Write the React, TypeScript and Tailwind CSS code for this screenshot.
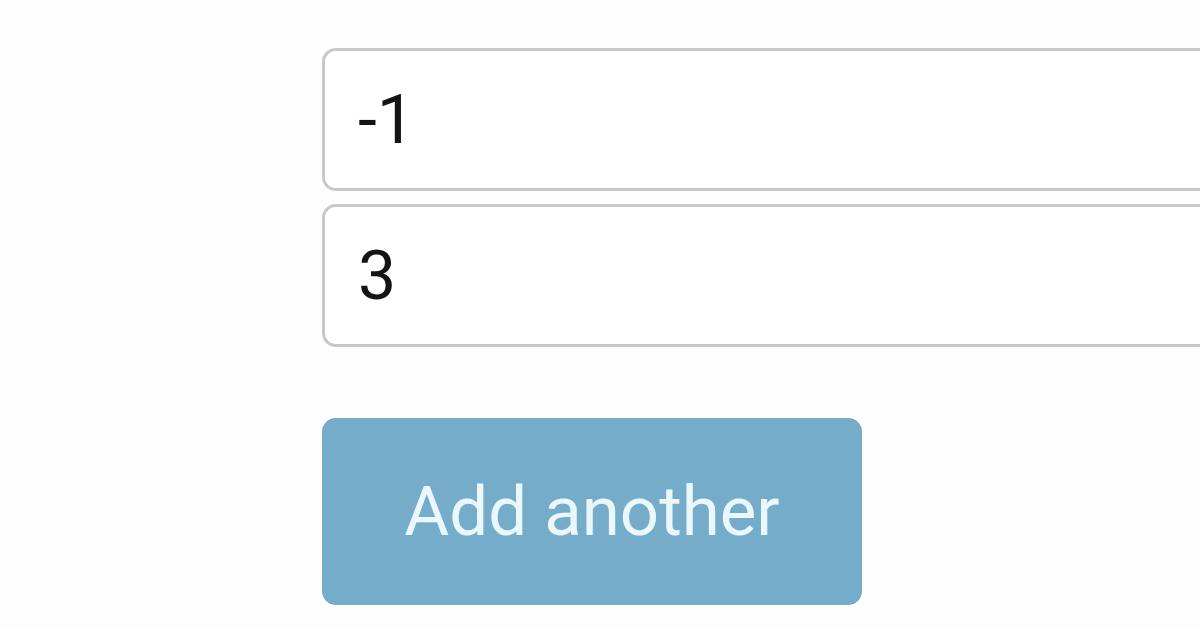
import React, { useState } from 'react';

export default function App() {
  const [values, setValues] = useState<string[]>(['-1', '3']);

  const update = (i: number, v: string) => {
    setValues(values.map((x, j) => (j === i ? v : x)));
  };

  return (
    <div className="h-[627px] w-[1200px] overflow-hidden bg-[#fdfdfd] font-['Roboto',sans-serif]">
      <div className="flex flex-col pl-[322px] pt-[48px]">
        <div className="flex flex-col gap-[13px]">
          {values.map((v, i) => (
            <input
              key={i}
              value={v}
              onChange={(e) => update(i, e.target.value)}
              className="box-border h-[143px] w-[1000px] rounded-[14px] border-[3px] border-[#c8c8c8] bg-white pl-[33px] text-[68px] text-[#141414] outline-none"
            />
          ))}
        </div>
        <button
          type="button"
          onClick={() => setValues([...values, ''])}
          className="mt-[71px] h-[187px] w-[540px] rounded-[14px] bg-[#74acc9] text-[69px] text-[#eaf8fc]"
        >
          Add another
        </button>
      </div>
    </div>
  );
}
